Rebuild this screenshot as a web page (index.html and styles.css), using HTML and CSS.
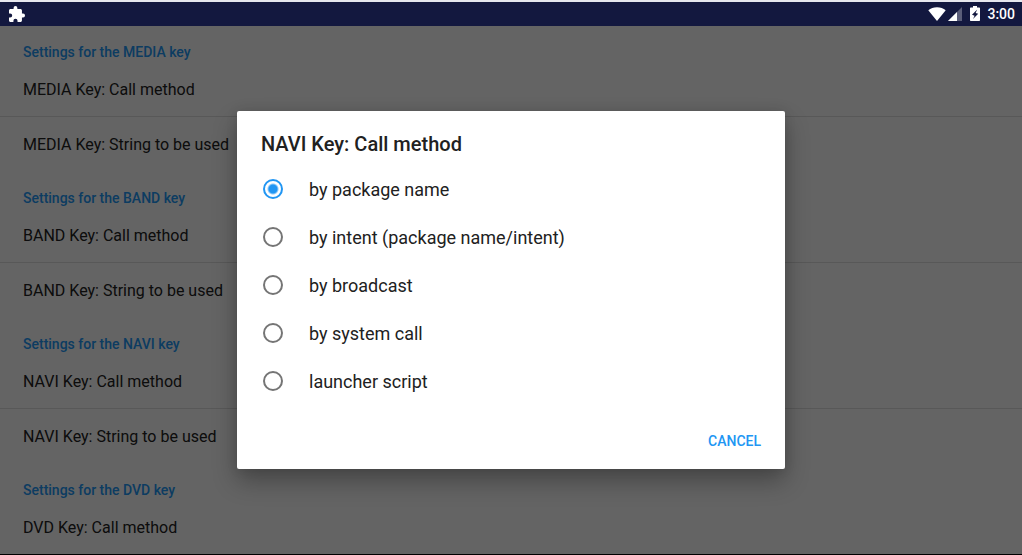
FILE: index.html
```html
<!DOCTYPE html>
<html lang="en">
<head>
<meta charset="utf-8">
<meta name="viewport" content="width=device-width, initial-scale=1">
<title>Key settings</title>
<link rel="stylesheet" href="styles.css">
</head>
<body>
<header class="status-bar">
  <svg class="icon-plugin" viewBox="2 1 21 21" aria-hidden="true"><path d="M20.500 11H19V7c0-1.100-.9-2-2-2h-4V3.500a2.500 2.500 0 0 0-5 0V5H4c-1.100 0-2 .9-2 2v3.800h1.500a2.700 2.700 0 0 1 0 5.400H2V20c0 1.100.9 2 2 2h3.800v-1.500a2.700 2.700 0 0 1 5.400 0V22H17c1.100 0 2-.9 2-2v-4h1.500a2.500 2.500 0 0 0 0-5z"/></svg>
  <div class="status-right">
    <svg class="icon-wifi" viewBox="0 0 18 14" aria-hidden="true"><path d="M9 14 .3 3.200C2.600 1.300 5.600.2 9 .2s6.400 1.100 8.700 3z"/></svg>
    <svg class="icon-signal" viewBox="0 0 14 14" aria-hidden="true"><path class="faint" d="M14 0v14H0z"/><path d="M9 5v9H0z"/></svg>
    <svg class="icon-battery" viewBox="0 0 10 15" aria-hidden="true"><path fill-rule="evenodd" d="M3 0h4v1.500h2c.6 0 1 .4 1 1V14c0 .6-.4 1-1 1H1c-.6 0-1-.4-1-1V2.500c0-.6.4-1 1-1h2zM7.200 3.500 2 8.800l2.600.9L3 13l5.200-5.200-2.600-.9z"/></svg>
    <time class="clock">3:00</time>
  </div>
</header>
<div class="screen">
  <main class="settings">
    <section class="group">
      <h2 class="group-title">Settings for the MEDIA key</h2>
      <button class="row" type="button">MEDIA Key: Call method</button>
      <button class="row" type="button">MEDIA Key: String to be used</button>
    </section>
    <section class="group">
      <h2 class="group-title">Settings for the BAND key</h2>
      <button class="row" type="button">BAND Key: Call method</button>
      <button class="row" type="button">BAND Key: String to be used</button>
    </section>
    <section class="group">
      <h2 class="group-title">Settings for the NAVI key</h2>
      <button class="row" type="button">NAVI Key: Call method</button>
      <button class="row" type="button">NAVI Key: String to be used</button>
    </section>
    <section class="group">
      <h2 class="group-title">Settings for the DVD key</h2>
      <button class="row" type="button">DVD Key: Call method</button>
    </section>
  </main>
  <div class="scrim">
    <form class="dialog" role="dialog" aria-modal="true" aria-labelledby="dialog-title">
      <h1 class="dialog-title" id="dialog-title">NAVI Key: Call method</h1>
      <div class="options" role="radiogroup" aria-labelledby="dialog-title">
        <label class="option"><input class="radio" type="radio" name="method" checked><span class="option-text">by package name</span></label>
        <label class="option"><input class="radio" type="radio" name="method"><span class="option-text">by intent (package name/intent)</span></label>
        <label class="option"><input class="radio" type="radio" name="method"><span class="option-text">by broadcast</span></label>
        <label class="option"><input class="radio" type="radio" name="method"><span class="option-text">by system call</span></label>
        <label class="option"><input class="radio" type="radio" name="method"><span class="option-text">launcher script</span></label>
      </div>
      <div class="actions"><button class="cancel" type="button">CANCEL</button></div>
    </form>
  </div>
</div>
</body>
</html>
```
FILE: styles.css
```css
* {
  box-sizing: border-box;
}

body {
  margin: 0;
  height: 100vh;
  display: flex;
  flex-direction: column;
  overflow: hidden;
  padding-bottom: 1px;
  background: #000;
  color: #212121;
  font-family: Roboto, "Liberation Sans", sans-serif;
}

h1,
h2 {
  margin: 0;
  font-weight: 500;
}

button {
  border: 0;
  background: none;
  font-family: inherit;
  cursor: pointer;
}

.status-bar {
  flex: none;
  display: flex;
  align-items: center;
  justify-content: space-between;
  height: 26px;
  padding: 0 7px 0 9px;
  border-top: 2px solid #e6e7ee;
  background: #13183f;
  color: #fff;
}

.status-bar svg {
  fill: #fff;
}

.status-right {
  display: flex;
  align-items: center;
}

.icon-plugin {
  width: 16px;
  height: 16px;
}

.icon-wifi {
  width: 18px;
  height: 14px;
  margin-right: 2px;
}

.icon-signal {
  width: 14px;
  height: 14px;
  margin-right: 8px;
}

.icon-signal .faint {
  opacity: 0.3;
}

.icon-battery {
  width: 10px;
  height: 15px;
  margin: 0 7px 2px 0;
}

.clock {
  font-size: 14px;
  font-weight: 500;
  line-height: 24px;
}

.screen {
  position: relative;
  flex: 1;
  min-height: 0;
  overflow: hidden;
  background: #fafafa;
}

.group-title {
  padding: 16px 23px 0;
  color: #2196f3;
  font-size: 14px;
  line-height: 20px;
}

.row {
  display: block;
  width: 100%;
  padding: 17px 23px 15px;
  border-bottom: 1px solid transparent;
  color: inherit;
  font-size: 16px;
  line-height: 22px;
  text-align: left;
}

.row:not(:last-child) {
  border-bottom-color: #dcdcdc;
}

.scrim {
  position: absolute;
  inset: 0;
  display: flex;
  align-items: center;
  justify-content: center;
  padding: 16px;
  background: rgba(0, 0, 0, 0.6);
}

.dialog {
  width: 100%;
  max-width: 548px;
  border-radius: 2px;
  background: #fff;
  box-shadow: 0 12px 24px rgba(0, 0, 0, 0.3), 0 0 12px rgba(0, 0, 0, 0.1);
}

.dialog-title {
  padding: 20px 24px 8px;
  font-size: 20px;
  line-height: 26px;
}

.option {
  display: flex;
  align-items: center;
  gap: 24px;
  height: 48px;
  padding: 0 24px;
  font-size: 18px;
  line-height: 24px;
}

.option-text {
  padding-top: 2px;
}

.radio {
  appearance: none;
  flex: none;
  width: 20px;
  height: 20px;
  margin: 0 2px;
  border: 2px solid #757575;
  border-radius: 50%;
}

.radio:checked {
  border-color: #2196f3;
  background: radial-gradient(circle, #2196f3 4px, transparent 6px);
}

.actions {
  display: flex;
  justify-content: flex-end;
  padding: 18px 16px 10px;
}

.cancel {
  padding: 8px;
  color: #2196f3;
  font-size: 14px;
  font-weight: 500;
  line-height: 20px;
}
```
